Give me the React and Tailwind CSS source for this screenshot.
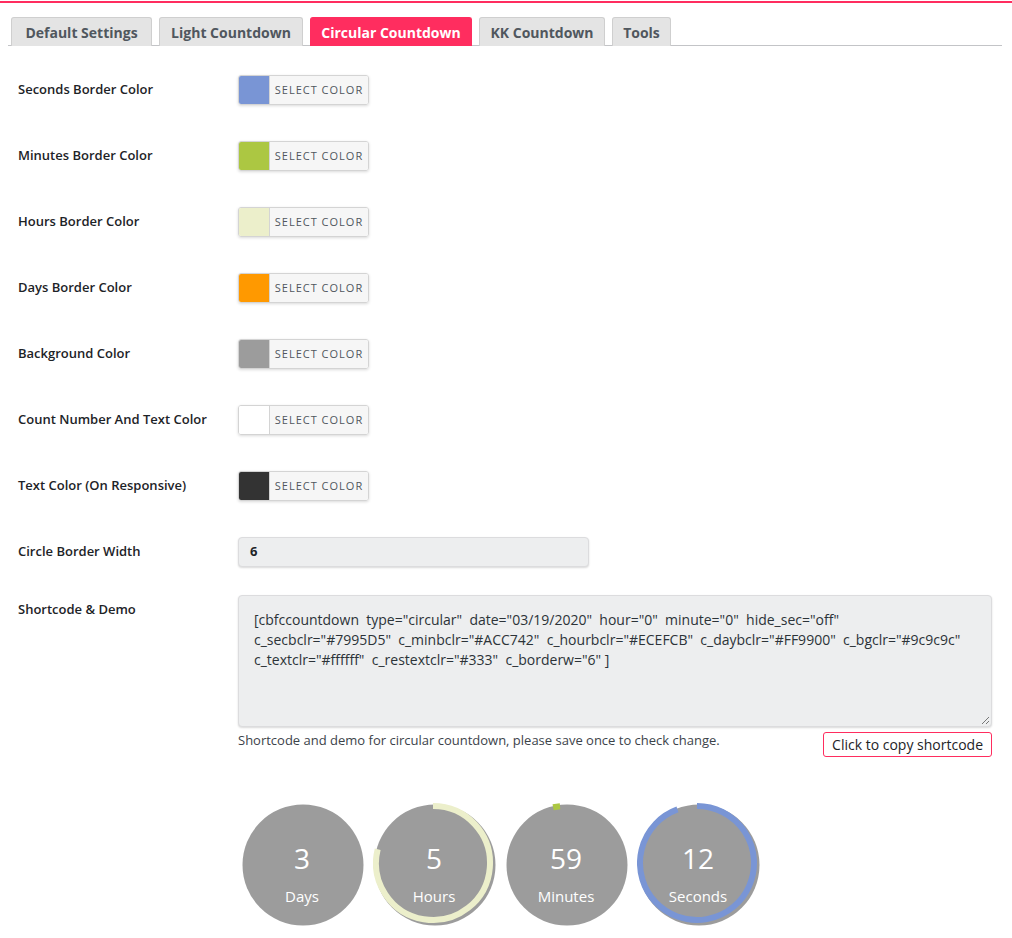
import React from "react";

const font = { fontFamily: '"Open Sans", "Noto Sans", Arial, sans-serif' };

const tabs = [
  { name: "Default Settings", w: "w-[141px]" },
  { name: "Light Countdown", w: "w-[144px]" },
  { name: "Circular Countdown", w: "w-[162px]", active: true },
  { name: "KK Countdown", w: "w-[126px]" },
  { name: "Tools", w: "w-[59px]" },
];

const colorRows = [
  { label: "Seconds Border Color", color: "bg-[#7995d5]" },
  { label: "Minutes Border Color", color: "bg-[#acc742]" },
  { label: "Hours Border Color", color: "bg-[#ecefcb]" },
  { label: "Days Border Color", color: "bg-[#ff9900]" },
  { label: "Background Color", color: "bg-[#9c9c9c]" },
  { label: "Count Number And Text Color", color: "bg-white" },
  { label: "Text Color (On Responsive)", color: "bg-[#333333]" },
];

// arc path, angles clockwise from 12 o'clock
function arc(cx, cy, r, a0, a1) {
  const p = a => {
    const t = ((a - 90) * Math.PI) / 180;
    return [cx + r * Math.cos(t), cy + r * Math.sin(t)];
  };
  const [x0, y0] = p(a0);
  const [x1, y1] = p(a1);
  const large = a1 - a0 > 180 ? 1 : 0;
  return `M ${x0} ${y0} A ${r} ${r} 0 ${large} 1 ${x1} ${y1}`;
}

const circles = [
  { num: "3", label: "Days", ring: null },
  { num: "5", label: "Hours", ring: { color: "#ECEFCB", a0: 0, a1: 284 } },
  { num: "59", label: "Minutes", ring: { color: "#ACC742", a0: -12, a1: -5 } },
  { num: "12", label: "Seconds", ring: { color: "#7995D5", a0: 0, a1: 340 } },
];

function Circle({ num, label, ring }) {
  return (
    <div className="relative w-[122px] h-[122px]">
      <svg width="124" height="124" className="absolute left-0 top-0">
        <circle cx="62" cy="62" r="60.5" fill="#9c9c9c" />
        {ring && (
          <path
            d={arc(60, 60, 57, ring.a0, ring.a1)}
            fill="none"
            stroke={ring.color}
            strokeWidth="6"
          />
        )}
      </svg>
      <div className="absolute inset-0 flex flex-col items-center text-white">
        <div className="mt-[37px] text-[28px] leading-[36px]">{num}</div>
        <div className="mt-[10px] text-[15px] leading-[20px]">{label}</div>
      </div>
    </div>
  );
}

function ColorPicker({ color }) {
  return (
    <div className="flex h-[30px] w-[131px] rounded-[3px] border border-[#d4d4d4] shadow-[0_1px_3px_rgba(0,0,0,0.15)] overflow-hidden">
      <div className={`w-[31px] h-full border-r border-[#d4d4d4] ${color}`}></div>
      <div className="flex-1 bg-[#f6f6f6] flex items-center justify-center text-[11px] tracking-[1px] text-[#50575e]">
        SELECT COLOR
      </div>
    </div>
  );
}

export default function App() {
  return (
    <div className="min-h-[938px] bg-white text-[#1d2327]" style={font}>
      <div className="h-[3px] border-t-2 border-[#ff2d5f] mt-[1px]"></div>
      <div className="ml-[8px] mr-[10px] mt-[13px] pl-[3px] flex gap-[7px] border-b border-[#c3c4c7]">
        {tabs.map(t => (
          <div
            key={t.name}
            className={
              "h-[29px] flex items-center justify-center text-[14px] font-bold rounded-t-[3px] border border-b-0 mb-[-1px] " +
              t.w +
              " " +
              (t.active
                ? "bg-[#ff2d5f] border-[#ff2d5f] text-white"
                : "bg-[#e4e4e4] border-[#cfcfcf] text-[#50575e]")
            }
          >
            {t.name}
          </div>
        ))}
      </div>

      <div className="pl-[18px] mt-[11px]">
        {colorRows.map(r => (
          <div key={r.label} className="h-[66px] flex items-center">
            <div className="w-[220px] text-[13px] font-semibold">{r.label}</div>
            <ColorPicker color={r.color} />
          </div>
        ))}
        <div className="h-[66px] flex items-center">
          <div className="w-[220px] text-[13px] font-semibold">Circle Border Width</div>
          <div className="w-[351px] h-[30px] bg-[#edeeef] rounded-[4px] border border-[#dcdcde] shadow-[0_1px_2px_rgba(0,0,0,0.15)] flex items-center pl-[11px] text-[13px] font-bold">
            6
          </div>
        </div>

        <div className="flex mt-[10px]">
          <div className="w-[220px] text-[13px] font-semibold pt-[5px]">Shortcode &amp; Demo</div>
          <div className="w-[754px]">
            <div className="relative h-[132px] bg-[#edeeef] rounded-[4px] border border-[#dcdcde] shadow-[0_1px_2px_rgba(0,0,0,0.15)] pl-[15px] pr-[16px] pt-[14px] text-[14px] leading-[20px] whitespace-pre-wrap text-[#2c3338]">
              {'[cbfccountdown  type="circular"  date="03/19/2020"  hour="0"  minute="0"  hide_sec="off"  c_secbclr="#7995D5"  c_minbclr="#ACC742"  c_hourbclr="#ECEFCB"  c_daybclr="#FF9900"  c_bgclr="#9c9c9c"  c_textclr="#ffffff"  c_restextclr="#333"  c_borderw="6" ]'}
              <svg width="10" height="10" className="absolute right-[1px] bottom-[1px]">
                <path d="M9 2 L2 9 M9 6 L6 9" stroke="#777" strokeWidth="1" />
              </svg>
            </div>
            <div className="flex justify-between items-start">
              <div className="text-[13px] leading-[18px] mt-[4px] text-[#3c434a]">
                Shortcode and demo for circular countdown, please save once to check change.
              </div>
              <div className="mt-[5px] h-[25px] px-[8px] flex items-center border border-[#ff2d5f] rounded-[3px] text-[14px] text-[#1d2327]">
                Click to copy shortcode
              </div>
            </div>
            <div className="flex gap-[10px] mt-[46px] ml-[3px]">
              {circles.map(c => (
                <Circle key={c.label} {...c} />
              ))}
            </div>
          </div>
        </div>
      </div>
    </div>
  );
}
